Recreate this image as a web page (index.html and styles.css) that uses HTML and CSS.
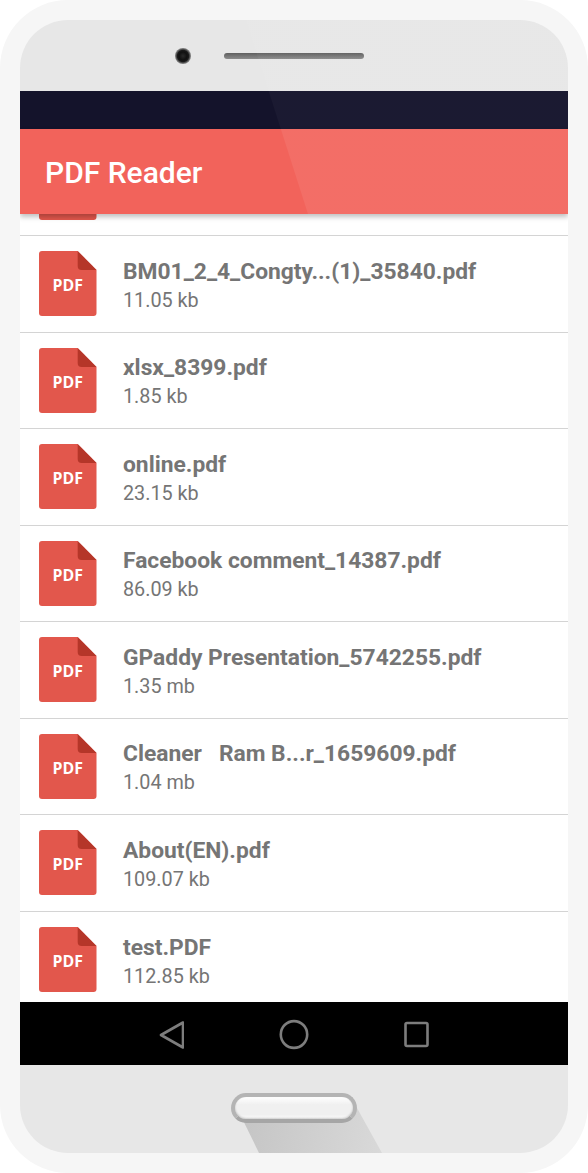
FILE: index.html
```html
<!DOCTYPE html>
<html lang="en">
<head>
    <meta charset="UTF-8">
    <meta name="viewport" content="width=device-width, initial-scale=1.0">
    <title>PDF Reader</title>
    <link rel="stylesheet" href="styles.css">
</head>
<body>
    <div class="phone">
        <div class="phone-inner">
            <div class="sheen"></div>

            <div class="earpiece">
                <span class="camera"></span>
                <span class="speaker"></span>
            </div>

            <div class="status-bar"></div>
            <header class="app-bar">PDF Reader</header>

            <ul class="file-list">
                <!-- scrolled row, only the foot of its icon shows under the app bar -->
                <li class="file-row">
                    <svg class="file-icon" viewBox="0 0 58 65" preserveAspectRatio="none"><use href="#pdfSheet"/></svg>
                </li>
                <li class="file-row">
                    <svg class="file-icon" viewBox="0 0 58 65" preserveAspectRatio="none"><use href="#pdfSheet"/><text x="29" y="40" class="file-icon-label">PDF</text></svg>
                    <div class="file-info">
                        <span class="file-name">BM01_2_4_Congty...(1)_35840.pdf</span>
                        <span class="file-size">11.05 kb</span>
                    </div>
                </li>
                <li class="file-row">
                    <svg class="file-icon" viewBox="0 0 58 65" preserveAspectRatio="none"><use href="#pdfSheet"/><text x="29" y="40" class="file-icon-label">PDF</text></svg>
                    <div class="file-info">
                        <span class="file-name">xlsx_8399.pdf</span>
                        <span class="file-size">1.85 kb</span>
                    </div>
                </li>
                <li class="file-row">
                    <svg class="file-icon" viewBox="0 0 58 65" preserveAspectRatio="none"><use href="#pdfSheet"/><text x="29" y="40" class="file-icon-label">PDF</text></svg>
                    <div class="file-info">
                        <span class="file-name">online.pdf</span>
                        <span class="file-size">23.15 kb</span>
                    </div>
                </li>
                <li class="file-row">
                    <svg class="file-icon" viewBox="0 0 58 65" preserveAspectRatio="none"><use href="#pdfSheet"/><text x="29" y="40" class="file-icon-label">PDF</text></svg>
                    <div class="file-info">
                        <span class="file-name">Facebook comment_14387.pdf</span>
                        <span class="file-size">86.09 kb</span>
                    </div>
                </li>
                <li class="file-row">
                    <svg class="file-icon" viewBox="0 0 58 65" preserveAspectRatio="none"><use href="#pdfSheet"/><text x="29" y="40" class="file-icon-label">PDF</text></svg>
                    <div class="file-info">
                        <span class="file-name">GPaddy Presentation_5742255.pdf</span>
                        <span class="file-size">1.35 mb</span>
                    </div>
                </li>
                <li class="file-row">
                    <svg class="file-icon" viewBox="0 0 58 65" preserveAspectRatio="none"><use href="#pdfSheet"/><text x="29" y="40" class="file-icon-label">PDF</text></svg>
                    <div class="file-info">
                        <span class="file-name">Cleaner &nbsp; Ram B...r_1659609.pdf</span>
                        <span class="file-size">1.04 mb</span>
                    </div>
                </li>
                <li class="file-row">
                    <svg class="file-icon" viewBox="0 0 58 65" preserveAspectRatio="none"><use href="#pdfSheet"/><text x="29" y="40" class="file-icon-label">PDF</text></svg>
                    <div class="file-info">
                        <span class="file-name">About(EN).pdf</span>
                        <span class="file-size">109.07 kb</span>
                    </div>
                </li>
                <li class="file-row">
                    <svg class="file-icon" viewBox="0 0 58 65" preserveAspectRatio="none"><use href="#pdfSheet"/><text x="29" y="40" class="file-icon-label">PDF</text></svg>
                    <div class="file-info">
                        <span class="file-name">test.PDF</span>
                        <span class="file-size">112.85 kb</span>
                    </div>
                </li>
            </ul>

            <nav class="nav-bar">
                <svg class="nav-icon" viewBox="0 0 26 32"><path d="M25 4.5 L3 17 L25 29.5 Z"/></svg>
                <svg class="nav-icon" viewBox="0 0 30 32"><ellipse cx="15" cy="16.5" rx="13.2" ry="13.4"/></svg>
                <svg class="nav-icon" viewBox="0 0 26 32"><rect x="1.5" y="5" width="22" height="23" rx="1.5"/></svg>
            </nav>

            <div class="chin">
                <div class="home-shadow"></div>
                <div class="home-button"></div>
            </div>
        </div>
    </div>

    <svg class="svg-defs" width="0" height="0">
        <defs>
            <g id="pdfSheet">
                <path fill="#e2574c" d="M3 0 H39 L58 19 V62 a3 3 0 0 1 -3 3 H3 a3 3 0 0 1 -3 -3 V3 a3 3 0 0 1 3 -3 Z"/>
                <path fill="#b53629" d="M39 0 L58 19 H43 a4 4 0 0 1 -4 -4 Z"/>
            </g>
        </defs>
    </svg>
</body>
</html>
```

FILE: styles.css
```css
* {
    box-sizing: border-box;
}
html, body {
    margin: 0;
    padding: 0;
    background-color: #fff;
}
body {
    font-family: 'Roboto', sans-serif;
}
.svg-defs {
    display: block;
    height: 0;
}
.phone {
    width: 588px;
    height: 1173px;
    padding: 20px;
    background-color: #f6f6f6;
    border-radius: 68px;
    overflow: hidden;
}
.phone-inner {
    position: relative;
    display: flex;
    flex-direction: column;
    height: 100%;
    background-color: #e7e7e7;
    border-radius: 48px;
    overflow: hidden;
}
/* light wedge across the top of the device */
.sheen {
    position: absolute;
    top: 0;
    left: 0;
    width: 100%;
    height: 194px;
    background: linear-gradient(rgba(255, 255, 255, 0.03) 109px, rgba(255, 255, 255, 0.07) 109px);
    clip-path: polygon(226px 0, 100% 0, 100% 100%, 288px 100%);
    z-index: 3;
    pointer-events: none;
}
.earpiece {
    flex: 0 0 71px;
    display: flex;
    align-items: center;
    padding: 1px 0 0 155px;
    gap: 33px;
}
.camera {
    width: 16px;
    height: 16px;
    border-radius: 50%;
    background: radial-gradient(circle, #2a2a2a 0, #111 35%, #1a1a1a 50%, #777 66%, #aaa 100%);
}
.speaker {
    width: 140px;
    height: 6px;
    border-radius: 3px;
    background: linear-gradient(#5f5f5f, #8c8c8c);
}
.status-bar {
    flex: 0 0 38px;
    background-color: #14132b;
}
.app-bar {
    position: relative;
    z-index: 2;
    flex: 0 0 85px;
    display: flex;
    align-items: center;
    padding: 2px 0 0 25px;
    background-color: #f2635b;
    color: #fff;
    font-size: 30px;
    font-weight: 500;
    box-shadow: 0 3px 5px rgba(0, 0, 0, 0.25);
}
.file-list {
    flex: 1;
    min-height: 0;
    margin: 0;
    padding: 0;
    list-style: none;
    background-color: #fff;
    overflow: hidden;
}
.file-row {
    display: flex;
    align-items: center;
    gap: 26.5px;
    height: 96.5px;
    padding: 0 19px;
    border-bottom: 1px solid #d4d4d4;
}
.file-row:first-child {
    margin-top: -74.5px;
}
.file-row:last-child {
    border-bottom: none;
}
.file-icon {
    flex: none;
    width: 57.5px;
    height: 65px;
}
.file-icon-label {
    fill: #fff;
    font-family: 'Open Sans', sans-serif;
    font-size: 16px;
    font-weight: 700;
    text-anchor: middle;
}
.file-info {
    display: flex;
    flex-direction: column;
    gap: 4px;
    padding-top: 3px;
    color: #757575;
}
.file-name {
    font-size: 22.8px;
    font-weight: 700;
    line-height: 27px;
}
.file-size {
    font-size: 19.8px;
    line-height: 24px;
}
.nav-bar {
    flex: 0 0 63px;
    display: flex;
    align-items: center;
    justify-content: center;
    gap: 95px;
    background-color: #000;
}
.nav-icon {
    height: 32px;
    width: auto;
    fill: none;
    stroke: #7d7d7d;
    stroke-width: 2.6;
    stroke-linejoin: round;
}
.chin {
    position: relative;
    flex: 0 0 88px;
    overflow: hidden;
}
.home-button {
    position: absolute;
    top: 27.5px;
    left: 211px;
    width: 126px;
    height: 30.5px;
    border: 4px solid #b4b4b4;
    border-bottom-color: #a6a6a6;
    border-radius: 16px;
    background: linear-gradient(#fff 0, #f0f0f0 35%, #f0f0f0 80%, #fff 100%);
    box-shadow: inset 0 -1px 2px rgba(0, 0, 0, 0.2);
}
.home-shadow {
    position: absolute;
    top: 43px;
    left: 217px;
    width: 145px;
    height: 45px;
    background: linear-gradient(100deg, #c4c4c4, #d9d9d9);
    clip-path: polygon(0 0, 120px 0, 100% 100%, 22px 100%);
}
```
